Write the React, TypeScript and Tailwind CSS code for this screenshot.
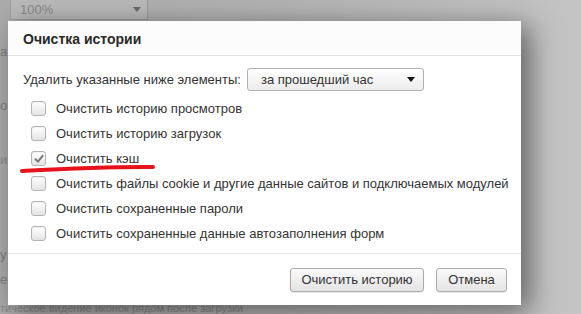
import React from "react";

const font = { fontFamily: '"Liberation Sans", Arial, sans-serif' };

function Checkbox({ checked }: { checked?: boolean }) {
  return (
    <div className="relative w-[15px] h-[15px] shrink-0 rounded-[3px] border border-[#b4b4b4] bg-gradient-to-b from-[#ffffff] to-[#e4e4e4] shadow-[inset_0_1px_1px_rgba(0,0,0,0.06)]">
      {checked && (
        <svg className="absolute left-[1px] top-[1px]" width="12" height="12" viewBox="0 0 12 12">
          <path d="M2.5 6.2 L5 8.6 L9.6 2.8" fill="none" stroke="#777" strokeWidth="2" strokeLinecap="round" strokeLinejoin="round" />
        </svg>
      )}
    </div>
  );
}

const rows = [
  { label: "Очистить историю просмотров" },
  { label: "Очистить историю загрузок" },
  { label: "Очистить кэш", checked: true },
  { label: "Очистить файлы cookie и другие данные сайтов и подключаемых модулей" },
  { label: "Очистить сохраненные пароли" },
  { label: "Очистить сохраненные данные автозаполнения форм" },
];

export default function App() {
  return (
    <div
      className="relative w-[581px] h-[314px] overflow-hidden bg-gradient-to-r from-[#ababab] via-[#b3b3b3] to-[#c4c4c4]"
      style={font}
    >
      {/* background page content */}
      <div className="absolute left-[10px] top-0 w-[138px] h-[20px] border border-t-0 border-[#9c9c9c] bg-[#b9b9b9] flex items-center justify-between pl-[9px] pr-[6px] text-[13px] text-[#8a8a8a]">
        <span>100%</span>
        <span className="w-0 h-0 border-l-[4px] border-r-[4px] border-t-[5px] border-l-transparent border-r-transparent border-t-[#6a6a6a]" />
      </div>
      <div className="absolute left-0 top-[42px] text-[13px] text-[#7d7d7d]">а</div>
      <div className="absolute left-0 top-[96px] text-[13px] text-[#7d7d7d]">о</div>
      <div className="absolute left-0 top-[150px] text-[13px] text-[#8a8a8a]">и</div>
      <div className="absolute left-0 top-[245px] text-[13px] text-[#7d7d7d]">у</div>
      <div className="absolute left-0 top-[270px] text-[13px] text-[#7d7d7d]">е</div>
      <div className="absolute left-0 top-[303px] text-[11px] leading-[11px] text-[#8a8a8a] whitespace-nowrap">
        тическое видение иконок рядом после загрузки
      </div>

      {/* dialog */}
      <div className="absolute left-[8px] top-[21px] w-[513px] h-[284px] bg-white flex flex-col shadow-[8px_6px_26px_rgba(0,0,0,0.5)] text-[#333]">
        <div className="h-[35px] shrink-0 flex items-center pl-[15px] pt-[2px] border-b border-[#e4e4e4] bg-[#fcfcfc] text-[14px] font-bold text-[#2a2a2a]">
          Очистка истории
        </div>

        <div className="flex flex-col px-[15px] pt-[12px]">
          <div className="flex items-center h-[23px] text-[13px]">
            <span>Удалить указанные ниже элементы:</span>
            <div className="ml-[6px] w-[177px] h-[23px] rounded-[3px] border border-[#b0b0b0] bg-gradient-to-b from-[#ffffff] to-[#ececec] flex items-center justify-between pl-[13px] pr-[8px]">
              <span>за прошедший час</span>
              <span className="w-0 h-0 border-l-[4px] border-r-[4px] border-t-[5px] border-l-transparent border-r-transparent border-t-[#111]" />
            </div>
          </div>

          <div className="flex flex-col mt-[5px] pl-[8px]">
            {rows.map((r) => (
              <div key={r.label} className="flex items-center h-[25px] gap-[10px] text-[13px]">
                <Checkbox checked={r.checked} />
                <span className="whitespace-nowrap">{r.label}</span>
              </div>
            ))}
          </div>
        </div>

        <div className="mt-[7px] border-t border-[#e4e4e4] flex justify-end gap-[12px] pr-[14px] pt-[14px]">
          <button className="h-[24px] w-[134px] rounded-[3px] border border-[#a9a9a9] bg-gradient-to-b from-[#fafafa] to-[#e4e4e4] text-[13px] text-[#333] shadow-[0_1px_1px_rgba(0,0,0,0.08)]">
            Очистить историю
          </button>
          <button className="h-[24px] w-[71px] rounded-[3px] border border-[#a9a9a9] bg-gradient-to-b from-[#fafafa] to-[#e4e4e4] text-[13px] text-[#333] shadow-[0_1px_1px_rgba(0,0,0,0.08)]">
            Отмена
          </button>
        </div>
      </div>

      {/* red underline annotation */}
      <svg className="absolute left-0 top-0 pointer-events-none" width="581" height="314">
        <path d="M22 171 C 60 169, 110 166.5, 153 167" fill="none" stroke="#e8121a" strokeWidth="4" strokeLinecap="round" />
      </svg>
    </div>
  );
}
